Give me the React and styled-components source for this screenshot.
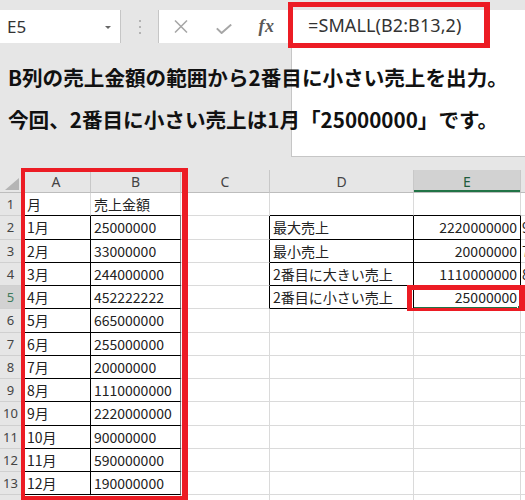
import React from "react";
import styled, { createGlobalStyle } from "styled-components";

const GRID = "#dadada";
const INK = "#000000";
const EXCEL_GREEN = "#217346";

const GlobalStyle = createGlobalStyle`
  html, body { margin: 0; padding: 0; background: #ffffff; }
  body { font-family: "Noto Sans", "Noto Sans CJK JP", sans-serif; }
`;

const Page = styled.div`
  position: relative;
  width: 525px;
  height: 500px;
  overflow: hidden;
  background: #ffffff;
`;

/* ---------- formula bar ---------- */

const FormulaRegion = styled.div`
  display: flex;
  align-items: flex-start;
  height: 170px;
  padding-top: 10px;
  box-sizing: border-box;
  background: #e6e6e6;
`;

const NameBox = styled.div`
  flex: 0 0 121px;
  height: 33px;
  box-sizing: border-box;
  display: flex;
  align-items: center;
  justify-content: space-between;
  padding: 1px 9px 0 7px;
  background: #ffffff;
  border-right: 1px solid #c6c6c6;
  font: 17px/30px "Noto Sans", sans-serif;
  color: #333333;
`;

const Caret = styled.span`
  width: 0;
  height: 0;
  border-left: 3px solid transparent;
  border-right: 3px solid transparent;
  border-top: 3px solid #666666;
`;

const Grip = styled.div`
  flex: 0 0 37px;
  display: flex;
  flex-direction: column;
  align-items: center;
  gap: 4px;
  padding-top: 10px;
`;

const GripDot = styled.span`
  width: 2px;
  height: 2px;
  background: #b3b3b3;
`;

const EditTools = styled.div`
  flex: 0 0 133px;
  height: 33px;
  box-sizing: border-box;
  display: flex;
  background: #ffffff;
  border-left: 1px solid #c6c6c6;
`;

const ToolButton = styled.div`
  flex: 0 0 43px;
  display: flex;
  align-items: center;
  justify-content: center;
`;

const FxLabel = styled.span`
  font: italic 600 18px/1 "Liberation Serif", "DejaVu Serif", serif;
  color: #595959;
  letter-spacing: 0.5px;
  margin-top: -2px;
`;

const FormulaInput = styled.div`
  flex: 1;
  height: 147px;
  box-sizing: border-box;
  background: #ffffff;
  border-left: 1px solid #c6c6c6;
  border-bottom: 1px solid #c6c6c6;
  padding-left: 16px;
  font: 18px/30px "Noto Sans", sans-serif;
  letter-spacing: 0.1px;
  color: #333333;
  white-space: nowrap;
`;

const Note = styled.div`
  position: absolute;
  left: 8px;
  top: 56px;
  font: 700 20.6px/42px "Noto Sans CJK JP", sans-serif;
  color: #111111;
  white-space: nowrap;
`;

/* ---------- worksheet ---------- */

const Sheet = styled.div`
  display: grid;
  grid-template-columns: 22px 69px 90px 89px 144px 107px 100px;
  grid-template-rows: 23px;
  grid-auto-rows: 23.25px;
`;

const Corner = styled.div`
  position: relative;
  background: #e6e6e6;
  border-right: 1px solid #bdbdbd;
  border-bottom: 1px solid #bdbdbd;
  svg { position: absolute; right: 2px; bottom: 2px; }
`;

const ColHead = styled.div`
  display: flex;
  align-items: center;
  justify-content: center;
  background: ${(p) => (p.$active ? "#d2d2d2" : "#e6e6e6")};
  border-right: 1px solid #c8c8c8;
  border-bottom: 1px solid #bdbdbd;
  box-shadow: ${(p) => (p.$active ? `inset 0 -2px 0 ${EXCEL_GREEN}` : "none")};
  font: 14px "Noto Sans", sans-serif;
  color: ${(p) => (p.$active ? "#1f5c3c" : "#444444")};
`;

const RowHead = styled.div`
  display: flex;
  align-items: center;
  justify-content: center;
  background: ${(p) => (p.$active ? "#d2d2d2" : "#e6e6e6")};
  border-right: 1px solid ${(p) => (p.$active ? EXCEL_GREEN : "#bdbdbd")};
  border-bottom: 1px solid #d0d0d0;
  font: 13px "Noto Sans", sans-serif;
  color: ${(p) => (p.$active ? "#3f7a5c" : "#444444")};
`;

const Cell = styled.div`
  position: relative;
  display: flex;
  align-items: center;
  justify-content: ${(p) => (p.$align === "right" ? "flex-end" : "flex-start")};
  padding: 0 ${(p) => (p.$align === "right" ? "3px" : "0")} 0 ${(p) => p.$indent}px;
  background: #ffffff;
  border-right: 1px solid ${(p) => p.$rc};
  border-bottom: 1px solid ${(p) => p.$bc};
  font: 14px "Noto Sans CJK JP", sans-serif;
  color: #222222;
  white-space: nowrap;
  overflow: hidden;
`;

const Selection = styled.div`
  position: absolute;
  left: -2px;
  top: -1px;
  right: -1px;
  bottom: -1px;
  border: 2px solid ${EXCEL_GREEN};
  pointer-events: none;
`;

const FillHandle = styled.span`
  position: absolute;
  right: -4px;
  bottom: -4px;
  width: 4px;
  height: 4px;
  background: ${EXCEL_GREEN};
  border: 1px solid #ffffff;
`;

const CellText = styled.span`
  position: relative;
`;

/* red highlight frames drawn over the sheet */
const Frame = styled.div`
  position: absolute;
  left: ${(p) => p.$x}px;
  top: ${(p) => p.$y}px;
  width: ${(p) => p.$w}px;
  height: ${(p) => p.$h}px;
  box-sizing: border-box;
  border-style: solid;
  border-color: #ec1c24;
  border-width: ${(p) => p.$bw};
  pointer-events: none;
`;

/* ---------- data ---------- */

const COLS = ["A", "B", "C", "D", "E", "F"];

const sales = [
  ["月", "売上金額"],
  ["1月", "25000000"],
  ["2月", "33000000"],
  ["3月", "244000000"],
  ["4月", "452222222"],
  ["5月", "665000000"],
  ["6月", "255000000"],
  ["7月", "20000000"],
  ["8月", "1110000000"],
  ["9月", "2220000000"],
  ["10月", "90000000"],
  ["11月", "590000000"],
  ["12月", "190000000"],
];

const summary = {
  2: ["最大売上", "2220000000", "9月"],
  3: ["最小売上", "20000000", "7月"],
  4: ["2番目に大きい売上", "1110000000", "8月"],
  5: ["2番目に小さい売上", "25000000", "1月"],
};

const ROWS = 14;
const ACTIVE = { row: 5, col: 4 };
const INDENT = [5, 3, 3, 3, 3, 1];

// bordered ranges: A2:B13 and D2:E5 (col index 0 = A)
const inTable = (r, c) =>
  (r >= 2 && r <= 13 && c >= 0 && c <= 1) || (r >= 2 && r <= 5 && c >= 3 && c <= 4);

function cellValue(r, c) {
  if (c <= 1) return sales[r - 1] ? sales[r - 1][c] : "";
  if (c >= 3 && summary[r]) return summary[r][c - 3];
  return "";
}

function rightColor(r, c) {
  if (c === 1 && inTable(r, c)) return "#7a7a7a";
  return inTable(r, c) || inTable(r, c + 1) ? INK : GRID;
}

function bottomColor(r, c) {
  return inTable(r, c) || inTable(r + 1, c) ? INK : GRID;
}

function CrossIcon() {
  return (
    <svg width="14" height="13" viewBox="0 0 14 13">
      <path d="M1 0.5 L13 12.5 M13 0.5 L1 12.5" stroke="#a6a6a6" strokeWidth="1.5" fill="none" />
    </svg>
  );
}

function CheckIcon() {
  return (
    <svg width="16" height="10" viewBox="0 0 16 10" style={{ marginTop: 5 }}>
      <path d="M0.8 4.4 L5.6 9 L15.2 0.6" stroke="#a6a6a6" strokeWidth="2" fill="none" />
    </svg>
  );
}

export default function App() {
  const cells = [];

  cells.push(
    <Corner key="corner">
      <svg width="14" height="12" viewBox="0 0 14 12">
        <path d="M14 0 L14 12 L0 12 Z" fill="#b5b5b5" />
      </svg>
    </Corner>
  );
  COLS.forEach((name, c) => {
    cells.push(
      <ColHead key={`h${name}`} $active={c === ACTIVE.col}>
        {name}
      </ColHead>
    );
  });

  for (let r = 1; r <= ROWS; r++) {
    cells.push(
      <RowHead key={`r${r}`} $active={r === ACTIVE.row}>
        {r}
      </RowHead>
    );
    COLS.forEach((name, c) => {
      const value = cellValue(r, c);
      const isActive = r === ACTIVE.row && c === ACTIVE.col;
      cells.push(
        <Cell
          key={`${name}${r}`}
          $rc={rightColor(r, c)}
          $bc={bottomColor(r, c)}
          $align={c === 4 ? "right" : "left"}
          $indent={INDENT[c]}
        >
          <CellText>{value}</CellText>
          {isActive && (
            <Selection>
              <FillHandle />
            </Selection>
          )}
        </Cell>
      );
    });
  }

  return (
    <>
      <GlobalStyle />
      <Page>
        <FormulaRegion>
          <NameBox>
            <span>E5</span>
            <Caret />
          </NameBox>
          <Grip>
            <GripDot />
            <GripDot />
            <GripDot />
          </Grip>
          <EditTools>
            <ToolButton>
              <CrossIcon />
            </ToolButton>
            <ToolButton>
              <CheckIcon />
            </ToolButton>
            <ToolButton>
              <FxLabel>fx</FxLabel>
            </ToolButton>
          </EditTools>
          <FormulaInput>=SMALL(B2:B13,2)</FormulaInput>
        </FormulaRegion>

        <Sheet>{cells}</Sheet>

        <Note>
          <div>B列の売上金額の範囲から2番目に小さい売上を出力。</div>
          <div>今回、2番目に小さい売上は1月「25000000」です。</div>
        </Note>

        <Frame $x={288} $y={2} $w={202} $h={46} $bw="5px 6px 5px 5px" />
        <Frame $x={21} $y={168} $w={167} $h={332} $bw="4px 6px 4px 4px" />
        <Frame $x={407} $y={285} $w={118} $h={26} $bw="5px 6px 3px 5px" />
      </Page>
    </>
  );
}
